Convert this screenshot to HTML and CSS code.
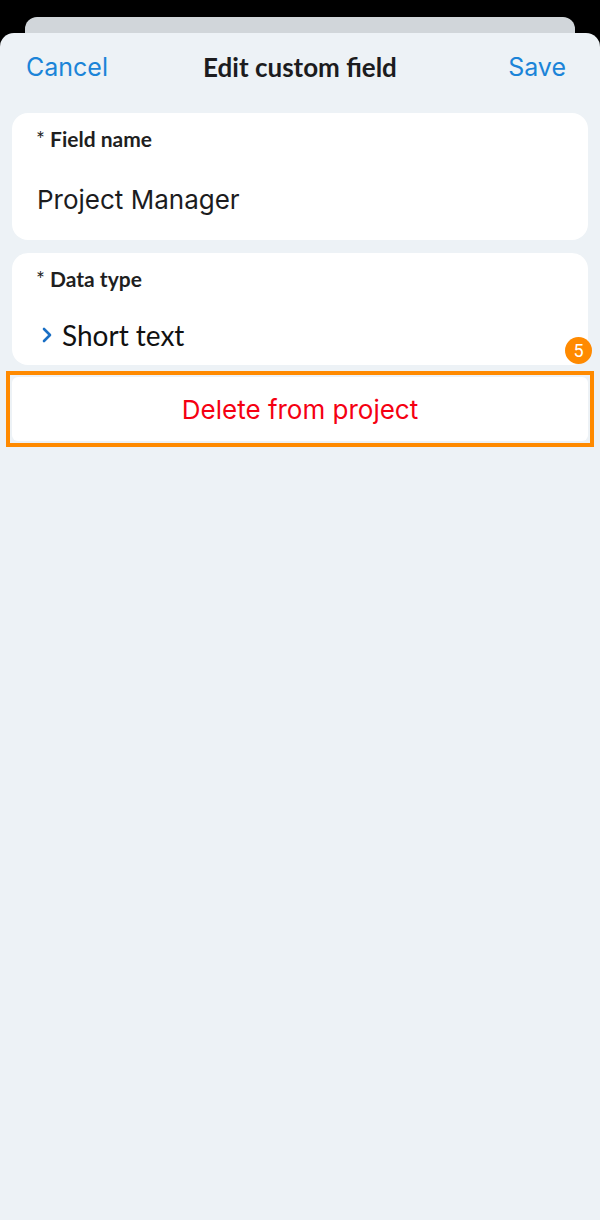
FILE: index.html
```html
<!DOCTYPE html>
<html>
<head>
<meta charset="utf-8">
<link rel="stylesheet" href="styles.css">
</head>
<body>
<div class="back-card"></div>
<div class="sheet">
  <header class="nav">
    <span class="nav-btn nav-left">Cancel</span>
    <span class="nav-title">Edit custom field</span>
    <span class="nav-btn nav-right">Save</span>
  </header>
  <section class="card card-name">
    <div class="label"><span class="req">*</span> Field name</div>
    <div class="value-input">Project Manager</div>
  </section>
  <section class="card card-type">
    <div class="label"><span class="req">*</span> Data type</div>
    <div class="value-select">
      <svg class="chev" width="12" height="18" viewBox="0 0 12 18"><polyline points="3,3 9,9 3,15" fill="none" stroke="#1a6fc4" stroke-width="2.6" stroke-linecap="round" stroke-linejoin="round"/></svg>
      <span>Short text</span>
    </div>
  </section>
  <div class="highlight">
    <div class="delete-btn">Delete from project</div>
    <span class="badge">5</span>
  </div>
</div>
</body>
</html>
```
FILE: styles.css
```css
* { box-sizing: border-box; }
html, body { margin: 0; padding: 0; }
body {
  background: #000;
  width: 600px;
  height: 1220px;
  overflow: hidden;
  display: flex;
  flex-direction: column;
}
.back-card {
  margin: 17px 25px 0;
  height: 16px;
  background: #d1d6da;
  border-radius: 12px 12px 0 0;
  flex: none;
}
.sheet {
  flex: 1;
  background: #edf2f6;
  border-radius: 14px 14px 0 0;
  padding: 0 12px;
}
.nav {
  height: 67px;
  display: grid;
  grid-template-columns: 1fr auto 1fr;
  align-items: center;
  padding: 0 22px 0 14px;
}
.nav-left { justify-self: start; }
.nav-right { justify-self: end; }
.nav-btn {
  font-family: Inter, "Liberation Sans", sans-serif;
  font-size: 25px;
  color: #1b84d8;
}
.nav-title {
  font-family: Lato, "Liberation Sans", sans-serif;
  font-weight: 700;
  font-size: 26px;
  color: #1c1c1e;
  position: relative;
  left: 4px;
}
.card {
  background: #fff;
  border-radius: 16px;
  padding: 14px 24px 0;
}
.card-name { margin-top: 13px; height: 127px; }
.card-type { margin-top: 13px; height: 112px; }
.label {
  font-family: Lato, "Liberation Sans", sans-serif;
  font-weight: 700;
  font-size: 21px;
  line-height: 24px;
  color: #1f1f1f;
}
.req { font-weight: 400; }
.value-input {
  margin-top: 32px;
  font-family: Inter, "Liberation Sans", sans-serif;
  font-size: 26px;
  line-height: 34px;
  color: #1c1c1e;
  padding-left: 1px;
}
.value-select {
  margin-top: 27px;
  display: flex;
  align-items: center;
  gap: 9px;
  font-family: Lato, "Liberation Sans", sans-serif;
  font-size: 28px;
  line-height: 34px;
  color: #111;
  padding-left: 5px;
}
.chev { flex: none; }
.highlight {
  position: relative;
  margin: 6px -6px 0;
  border: 4px solid #ff8a00;
  padding: 2px;
}
.delete-btn {
  height: 64px;
  background: #fff;
  border-radius: 6px;
  display: flex;
  align-items: center;
  justify-content: center;
  font-family: Inter, "Liberation Sans", sans-serif;
  font-size: 26px;
  color: #f50012;
}
.badge {
  position: absolute;
  right: -2px;
  top: -38px;
  width: 27px;
  height: 27px;
  border-radius: 50%;
  background: #ff8a00;
  color: #fff;
  font-family: Roboto, "Liberation Sans", sans-serif;
  font-size: 18px;
  display: flex;
  align-items: center;
  justify-content: center;
}
```
